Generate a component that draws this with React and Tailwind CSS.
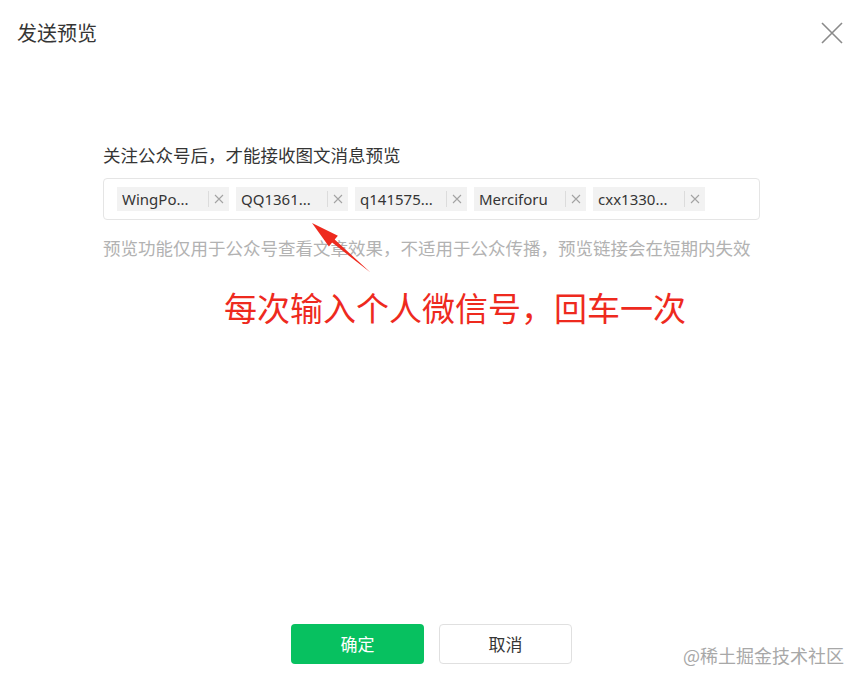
import React from "react";

const cjk = { fontFamily: '"Noto Sans CJK SC", "Noto Sans", sans-serif' };

function Tag({ text }) {
  return (
    <div className="flex h-[24px] w-[112px] shrink-0 items-center bg-[#f2f2f2] pl-[5px]">
      <span
        className="flex-1 overflow-hidden whitespace-nowrap text-[15px] leading-[24px] text-[#353535]"
        style={{ fontFamily: '"Noto Sans", "Noto Sans CJK SC", sans-serif' }}
      >
        {text}
      </span>
      <span className="h-[16px] w-px bg-[#dcdcdc]" />
      <span className="flex w-[20px] items-center justify-center">
        <svg width="10" height="10" viewBox="0 0 10 10">
          <path d="M1 1L9 9M9 1L1 9" stroke="#a3a3a3" strokeWidth="1.1" />
        </svg>
      </span>
    </div>
  );
}

export default function App() {
  const tags = ["WingPo...", "QQ1361...", "q141575...", "Merciforu", "cxx1330..."];
  return (
    <div className="relative flex h-[685px] w-[863px] flex-col bg-white" style={cjk}>
      <div className="flex h-[66px] items-center justify-between pl-[17px] pr-[19px]">
        <span className="text-[20px] leading-[28px] text-[#353535]">发送预览</span>
        <svg width="24" height="24" viewBox="0 0 24 24">
          <path d="M2 2L22 22M22 2L2 22" stroke="#8a8a8a" strokeWidth="1.6" />
        </svg>
      </div>

      <div className="mx-auto w-[657px]">
        <div className="mt-[77px] text-[17.5px] leading-[24px] text-[#353535]">
          关注公众号后，才能接收图文消息预览
        </div>
        <div className="mt-[11px] flex h-[42px] items-center gap-[7px] rounded-[4px] border border-[#e5e5e5] pl-[13px]">
          {tags.map((t) => (
            <Tag key={t} text={t} />
          ))}
        </div>
        <div className="mt-[16px] text-[17.5px] leading-[24px] text-[#b2b2b2]">
          预览功能仅用于公众号查看文章效果，不适用于公众传播，预览链接会在短期内失效
        </div>
        <div className="mt-[25px] pl-[121px] text-[33px] leading-[44px] text-[#ee2a1e]">
          每次输入个人微信号，回车一次
        </div>
      </div>

      <div className="mt-auto mb-[21px] flex justify-center gap-[15px]">
        <button className="h-[40px] w-[133px] rounded-[4px] bg-[#07c160] text-[17px] text-white">
          确定
        </button>
        <button className="h-[40px] w-[133px] rounded-[4px] border border-[#e0e0e0] bg-white text-[17px] text-[#353535]">
          取消
        </button>
      </div>

      <svg className="pointer-events-none absolute left-0 top-0" width="863" height="685">
        <polygon
          points="370.5,272.5 334.7,239.6 337.9,235.8 312,223 328.9,246.4 332.1,242.6"
          fill="#ee2a1e"
        />
      </svg>

      <div className="absolute left-[683px] top-[642px] text-[18px] leading-[26px] text-[#a8a8a8]">
        @稀土掘金技术社区
      </div>
    </div>
  );
}
